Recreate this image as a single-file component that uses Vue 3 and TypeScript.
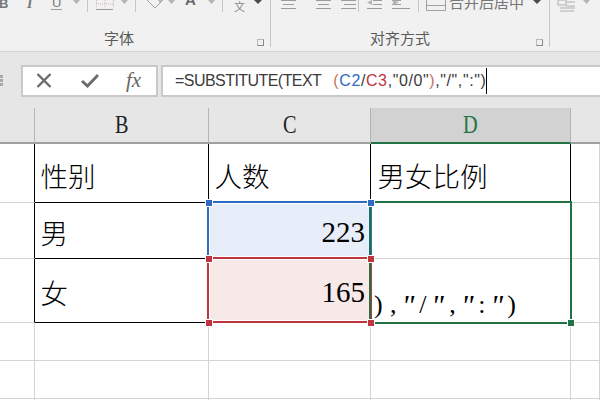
<template>
  <div class="app">
    <div class="ribbon">
      <section class="group font-group">
        <svg class="tools" width="270" height="14" viewBox="0 0 270 14">
          <text x="-1" y="8" class="tool-text bold">B</text>
          <text x="27" y="8" class="tool-text italic">I</text>
          <text x="52" y="7" class="tool-text">U</text>
          <line x1="51" y1="9.5" x2="62" y2="9.5" class="icon-line" />
          <polygon points="73,0 80,0 76.5,4" class="arrow" />
          <line x1="87.5" y1="0" x2="87.5" y2="12" class="sep" />
          <path d="M96.5 0v8M113.5 0v8M105 0v8M96 4h18" class="dotted" />
          <line x1="96" y1="9.5" x2="113" y2="9.5" class="icon-line" />
          <polygon points="121,0 128,0 124.5,4" class="arrow" />
          <line x1="135.5" y1="0" x2="135.5" y2="12" class="sep" />
          <path d="M147 0l8 8 8-8" class="icon-stroke" />
          <path d="M158 0h4l-2 3z" class="arrow" />
          <polygon points="168,0 175,0 171.5,4" class="arrow" />
          <text x="185" y="5" class="tool-text bold wide">A</text>
          <polygon points="208,0 215,0 211.5,4" class="arrow" />
          <line x1="222.5" y1="0" x2="222.5" y2="12" class="sep" />
          <text x="234" y="11" class="tool-cjk small">文</text>
          <polygon points="254,0 262,0 258,4" class="arrow dark" />
        </svg>
        <div class="group-label">
          <span class="label-text">字体</span>
          <span class="launcher"></span>
        </div>
      </section>
      <section class="group align-group">
        <svg class="tools" width="278" height="14" viewBox="0 0 278 14">
          <path d="M10 .5h15M12 4.5h11M10 8.5h15M45 .5h15M47 4.5h11M45 8.5h15M70 .5h15M73 4.5h12M70 8.5h15" class="icon-line" />
          <line x1="87.5" y1="0" x2="87.5" y2="12" class="sep" />
          <path d="M102 .5h9M102 4.5h9M96 8.5h15M121 .5h9M121 4.5h9M121 8.5h18" class="icon-line" />
          <path d="M101 0l-5 2.5 5 2.5zM122 0l6 2.5-6 2.5z" class="arrow" />
          <line x1="147.5" y1="0" x2="147.5" y2="12" class="sep" />
          <path d="M155.5 0v10.5h19V0M155 5.5h19" class="icon-stroke" />
          <text x="178" y="8" class="tool-cjk">合并后居中</text>
          <polygon points="262,0 270,0 266,4" class="arrow dark" />
        </svg>
        <div class="group-label">
          <span class="label-text">对齐方式</span>
          <span class="launcher"></span>
        </div>
      </section>
      <section class="group last-group">
        <svg class="tools" width="50" height="14" viewBox="0 0 50 14">
          <path d="M8 0h8v5H8zM16 2h9M16 6h9M10 8h15M10 11h14" class="icon-faint" />
          <polygon points="33,0 40,0 36.5,4" class="arrow" />
        </svg>
      </section>
    </div>

    <div class="formula-bar">
      <div class="grip"><i></i><i></i><i></i></div>
      <div class="formula-buttons">
        <svg width="16" height="15" viewBox="0 0 16 15"><path d="M1.500 1l13 13M14.500 1l-13 13" class="fb-icon" /></svg>
        <svg width="18" height="15" viewBox="0 0 18 15"><path d="M1 8l5.500 5L17 2" class="fb-icon thick" /></svg>
        <span class="fx">fx</span>
      </div>
      <div class="formula-input">
        <span class="head-text">=SUBSTITUTE(TEXT</span><span class="paren gap">(</span><span class="ref-blue">C2</span><span>/</span><span class="ref-red">C3</span><span>,"0/0"</span><span class="paren">)</span><span>,"/",":")</span><i class="caret"></i>
      </div>
    </div>

    <div class="sheet">
      <div class="cell head"></div>
      <div class="cell head col"><span class="letter">B</span></div>
      <div class="cell head col"><span class="letter">C</span></div>
      <div class="cell head col active"><span class="letter">D</span></div>
      <div class="cell head end"></div>

      <template v-for="row in rows" :key="row.id">
        <div class="cell" :class="{ 'edge': row.boxed }"></div>
        <div class="cell text" :class="{ 'boxed': row.boxed }">{{ row.b }}</div>
        <div class="cell text" :class="[{ 'boxed': row.boxed, 'num': row.isNum }, row.tone]">{{ row.c }}</div>
        <div class="cell text d-cell" :class="{ 'boxed': row.boxed && row.id === 1 }">
          {{ row.d }}
          <span v-if="row.spill" class="spill">
            <span v-for="(ch, i) in spill" :key="i" class="spill-ch" :class="{ 'slant': ch === '\u0022' }">{{ ch }}</span>
          </span>
        </div>
        <div class="cell"></div>
      </template>

      <div class="frame blue"></div>
      <div class="frame red"></div>
      <div class="frame green"></div>
      <span
        v-for="h in handles"
        :key="h.x + '-' + h.y"
        class="handle"
        :style="{ left: h.x + 'px', top: h.y + 'px', backgroundColor: h.color }"
      ></span>
    </div>
  </div>
</template>

<script setup lang="ts">
interface Row {
  id: number;
  b: string;
  c: string;
  d: string;
  boxed: boolean;
  isNum?: boolean;
  tone?: string;
  spill?: boolean;
}

const rows: Row[] = [
  { id: 1, b: "性别", c: "人数", d: "男女比例", boxed: true },
  { id: 2, b: "男", c: "223", d: "", boxed: true, isNum: true, tone: "tone-blue" },
  { id: 3, b: "女", c: "165", d: "", boxed: true, isNum: true, tone: "tone-red", spill: true },
  { id: 4, b: "", c: "", d: "", boxed: false },
  { id: 5, b: "", c: "", d: "", boxed: false },
  { id: 6, b: "", c: "", d: "", boxed: false },
];

const spill = '),"/",":")'.split("");

const blue = "#2f6bc4";
const red = "#c0343f";
const green = "#217346";

// 选区角上的小方块
const handles = [
  { x: 205, y: 91, color: blue },
  { x: 367, y: 91, color: blue },
  { x: 205, y: 147, color: red },
  { x: 367, y: 147, color: red },
  { x: 205, y: 211, color: red },
  { x: 367, y: 211, color: red },
  { x: 567, y: 211, color: green },
];
</script>

<style>
html,
body {
  margin: 0;
  background: #fff;
}
</style>

<style scoped>
.app {
  width: 600px;
  height: 400px;
  overflow: hidden;
  font-family: "Liberation Serif", "Noto Sans CJK SC", serif;
}

.ribbon {
  display: flex;
  height: 51px;
  background: #f1f1f1;
  border-bottom: 1px solid #d4d4d4;
}

.group {
  display: flex;
  flex-direction: column;
  height: 47px;
  box-sizing: border-box;
  border-right: 1px solid #c6c6c6;
}

.font-group {
  width: 271px;
}

.align-group {
  width: 279px;
}

.last-group {
  border-right: 0;
}

.tools {
  display: block;
  flex: none;
}

.tool-text {
  font-family: "Liberation Sans", sans-serif;
  font-size: 13px;
  fill: #777;
}

.bold {
  font-weight: 700;
}

.italic {
  font-style: italic;
  font-family: "Liberation Serif", serif;
  font-size: 14px;
  font-weight: 700;
}

.wide {
  font-size: 15px;
  fill: #666;
}

.tool-cjk {
  font-family: "Noto Sans CJK SC", sans-serif;
  font-size: 15px;
  fill: #777;
}

.small {
  font-size: 11px;
  fill: #888;
}

.icon-line {
  stroke: #9c9c9c;
  stroke-width: 1;
  fill: none;
}

.icon-stroke {
  stroke: #a2a2a2;
  stroke-width: 1;
  fill: none;
}

.icon-faint {
  stroke: #c4c4c4;
  stroke-width: 1.5;
  fill: none;
}

.dotted {
  stroke: #c9b6c9;
  stroke-width: 1;
  stroke-dasharray: 1 1;
  fill: none;
}

.sep {
  stroke: #c6c6c6;
  stroke-width: 1;
}

.arrow {
  fill: #b4b4b4;
}

.arrow.dark {
  fill: #4c4c4c;
}

.group-label {
  display: flex;
  flex: 1;
  align-items: flex-end;
  position: relative;
}

.label-text {
  font-family: "Noto Sans CJK SC", sans-serif;
  font-size: 15px;
  line-height: 20px;
  color: #5a5a5a;
}

.font-group .label-text {
  margin-left: 104px;
  margin-bottom: -1px;
}

.align-group .label-text {
  margin-left: 99px;
  margin-bottom: -1px;
}

.launcher {
  position: absolute;
  right: 6px;
  bottom: 1px;
  width: 5px;
  height: 5px;
  border: 1px solid #b8b8b8;
  border-right-color: #8a8a8a;
  border-bottom-color: #8a8a8a;
}

.formula-bar {
  display: flex;
  align-items: center;
  height: 56px;
  box-sizing: border-box;
  padding-top: 1px;
  background: #e6e6e6;
}

.grip {
  display: flex;
  flex-direction: column;
  gap: 1px;
  width: 21px;
}

.grip i {
  display: block;
  width: 3px;
  height: 3px;
  background: #a8a8a8;
}

.formula-buttons {
  display: flex;
  align-items: center;
  box-sizing: border-box;
  width: 137px;
  height: 32px;
  padding-left: 13px;
  gap: 29px;
  background: #fff;
  border: 2px solid #c9c9c9;
}

.fb-icon {
  stroke: #6c6c6c;
  stroke-width: 2.4;
  fill: none;
}

.fb-icon.thick {
  stroke-width: 3;
}

.fx {
  font-family: "Liberation Serif", serif;
  font-style: italic;
  font-size: 21px;
  color: #666;
  margin-left: -2px;
}

.formula-input {
  display: flex;
  align-items: center;
  flex: 1;
  height: 32px;
  box-sizing: border-box;
  margin-left: 3px;
  padding-left: 12px;
  background: #fff;
  border: 2px solid #c9c9c9;
  border-right: 0;
  font-family: "Liberation Sans", sans-serif;
  font-size: 16px;
  letter-spacing: 0.6px;
  color: #3a3a3a;
  white-space: pre;
}

.head-text {
  letter-spacing: -0.55px;
}

.paren {
  color: #c9705a;
}

.gap {
  margin-left: 12px;
}

.ref-blue {
  color: #2f6bc4;
}

.ref-red {
  color: #c0343f;
}

.caret {
  display: block;
  width: 1px;
  height: 26px;
  background: #000;
}

.sheet {
  position: relative;
  display: grid;
  grid-template-columns: 35px 174px 162px 200px 1fr;
  grid-template-rows: 36px 59px 56px 64px 38px 38px 1fr;
  height: 292px;
  background: #fff;
}

.cell {
  box-sizing: border-box;
  border-right: 1px solid #d4d4d4;
  border-bottom: 1px solid #d4d4d4;
  min-width: 0;
}

.head {
  background: #e6e6e6;
  border-right-color: #b4b4b4;
  border-bottom: 2px solid #a0a0a0;
}

.head.end {
  border-right: 0;
}

.col {
  display: flex;
  align-items: center;
  justify-content: center;
  color: #222;
}

.letter {
  display: inline-block;
  font-size: 26px;
  line-height: 30px;
  transform: scaleX(0.78);
}

.active {
  background: #d2d2d2;
  color: #217346;
  border-bottom-color: #217346;
}

.edge {
  border-right-color: #000;
}

.boxed {
  border-right-color: #000;
  border-bottom-color: #000;
}

.text {
  position: relative;
  display: flex;
  align-items: center;
  padding: 3px 5px 0 5.5px;
  font-family: "Noto Sans CJK SC", sans-serif;
  font-size: 27.5px;
  font-weight: 300;
  color: #000;
  white-space: nowrap;
}

.num {
  justify-content: flex-end;
  font-family: "Liberation Serif", serif;
  font-size: 29px;
  font-weight: 400;
}

.tone-blue {
  background: #e7eef9;
}

.tone-red {
  background: #f8e9e9;
}

.d-cell {
  padding-left: 6.5px;
}

.spill {
  position: absolute;
  left: 0;
  bottom: 2px;
  display: flex;
  font-family: "Liberation Serif", serif;
  font-size: 26px;
  font-weight: 400;
  line-height: 30px;
}

.spill-ch {
  width: 14.8px;
  text-align: center;
}

.slant {
  font-style: italic;
  font-size: 30px;
  line-height: 30px;
}

.frame {
  position: absolute;
  box-sizing: border-box;
  border: 2px solid;
  pointer-events: none;
  box-shadow: inset 0 0 0 1px #fff;
}

.frame.blue {
  left: 207px;
  top: 93px;
  width: 165px;
  height: 58px;
  border-color: #2f6bc4;
}

.frame.red {
  left: 207px;
  top: 149px;
  width: 165px;
  height: 66px;
  border-color: #c0343f;
}

.frame.green {
  left: 369px;
  top: 93px;
  width: 203px;
  height: 123px;
  border-color: #217346;
  box-shadow: none;
}

.handle {
  position: absolute;
  width: 6px;
  height: 6px;
  box-sizing: content-box;
  border: 1px solid #fff;
}
</style>
